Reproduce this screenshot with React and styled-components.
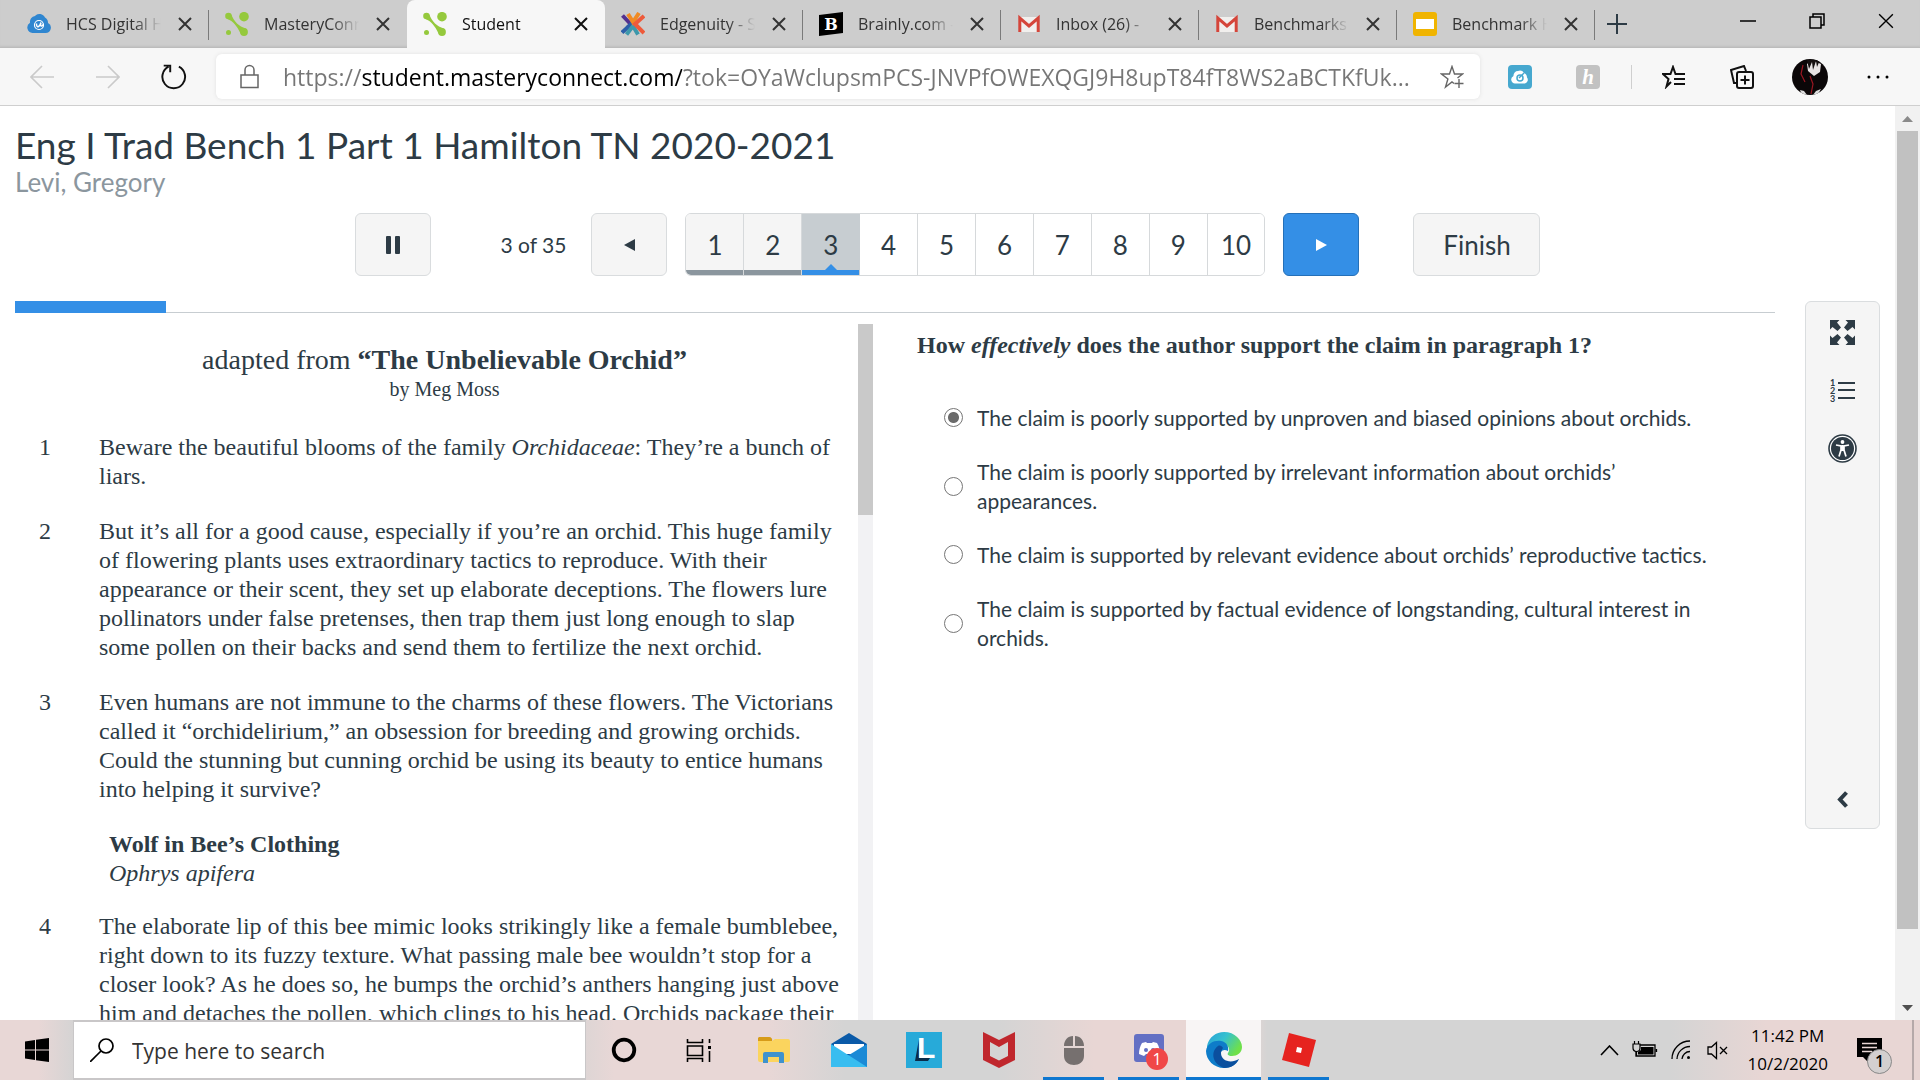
import React, { useState } from 'react';
import styled, { createGlobalStyle } from 'styled-components';

const ui = '"Open Sans", "Noto Sans", sans-serif';
const lato = 'Lato, sans-serif';
const serif = '"Liberation Serif", serif';
const ink = '#2d3b45';

const GlobalStyle = createGlobalStyle`
  * {
    box-sizing: border-box;
  }
  body {
    margin: 0;
    font-family: ${lato};
    color: ${ink};
    background: #fff;
  }
  button {
    margin: 0;
    padding: 0;
    border: 0;
    background: none;
    color: inherit;
    font: inherit;
    cursor: pointer;
  }
  svg {
    display: block;
    flex: none;
  }
`;

const Screen = styled.div`
  display: flex;
  flex-direction: column;
  height: 100vh;
  overflow: hidden;
`;

/* ---------- browser chrome ---------- */

const TabStrip = styled.header`
  display: flex;
  height: 48px;
  flex: none;
  padding-left: 11px;
  background: #cdcdcd;
  box-shadow: inset 0 -3px 3px -2px #b4b4b4;
`;

const TabItem = styled.div`
  flex: 0 1 198px;
  min-width: 0;
  display: flex;
  align-items: center;
  gap: 15px;
  padding: 0 17px 0 16px;
  position: relative;
  border-radius: 8px 8px 0 0;
  background: ${(props) => (props.$active ? '#f7f7f7' : 'transparent')};
  color: ${(props) => (props.$active ? '#111' : '#333')};

  &::after {
    content: '';
    position: absolute;
    right: 0;
    top: 10px;
    height: 30px;
    width: 1px;
    background: ${(props) => (props.$divider ? '#7a7a7a' : 'transparent')};
  }
`;

const TabTitle = styled.button`
  flex: 1;
  min-width: 0;
  overflow: hidden;
  white-space: nowrap;
  text-align: left;
  font-family: ${ui};
  font-size: 16px;
  line-height: 24px;
  mask-image: linear-gradient(to right, #000 70%, transparent 98%);
`;

const WindowButtons = styled.div`
  display: flex;
  align-items: center;
  margin-left: auto;
  padding-bottom: 6px;
`;

const WindowButton = styled.button`
  width: 69px;
  height: 40px;
  display: flex;
  align-items: center;
  justify-content: center;
  color: #000;
`;

const NewTab = styled.button`
  width: 44px;
  display: flex;
  align-items: center;
  justify-content: center;
`;

const AddressRow = styled.div`
  display: flex;
  align-items: center;
  flex: none;
  height: 58px;
  padding: 0 8px 0 9px;
  background: #f7f7f7;
  border-bottom: 1px solid #cfcfcf;
`;

const NavButton = styled.button`
  width: ${(props) => (props.$wide ? 68 : 66)}px;
  height: 44px;
  display: flex;
  align-items: center;
  justify-content: center;
  color: ${(props) => (props.$dim ? '#cacaca' : '#111')};
`;

const AddressBox = styled.div`
  flex: 1;
  min-width: 0;
  height: 45px;
  margin: 0 6px 0 9px;
  padding: 0 16px 0 24px;
  display: flex;
  align-items: center;
  gap: 24px;
  border-radius: 6px;
  background: #fff;
  box-shadow: 0 0 4px #e2e2e2;
  color: #666;
`;

const AddressInput = styled.input`
  flex: 1;
  min-width: 0;
  padding: 0;
  border: 0;
  outline: 0;
  font-family: ${ui};
  font-size: 23px;
  line-height: 32px;
  text-overflow: ellipsis;
  color: #767676;
  background: linear-gradient(to right, #767676 79px, #000 79px, #000 399px, #767676 399px);
  background-clip: text;
  -webkit-text-fill-color: transparent;
`;

const Divider = styled.span`
  width: 1px;
  height: 24px;
  margin: 0 8px 0 9px;
  background: #cfcfcf;
`;

/* ---------- test page ---------- */

const Viewport = styled.div`
  flex: 1;
  min-height: 0;
  display: flex;
`;

const Page = styled.main`
  flex: 1;
  min-width: 0;
  display: flex;
  flex-direction: column;
  padding: 17px 15px 0;
`;

const Title = styled.h1`
  margin: 0;
  font-size: 37px;
  line-height: 44px;
  font-weight: 400;
`;

const StudentName = styled.p`
  margin: 0;
  font-size: 26px;
  line-height: 30px;
  color: #8b969e;
`;

const Controls = styled.div`
  display: flex;
  justify-content: center;
  align-items: center;
  margin-top: 16px;
`;

const Button = styled.button`
  width: ${(props) => props.$width || 76}px;
  height: 63px;
  display: flex;
  align-items: center;
  justify-content: center;
  font-size: 26px;
  border: 1px solid ${(props) => (props.$primary ? '#2570b8' : '#d9dcde')};
  border-radius: 6px;
  background: ${(props) => (props.$primary ? '#348fe6' : '#f5f5f5')};
  color: ${(props) => (props.$primary ? '#fff' : ink)};
`;

const Counter = styled.span`
  padding: 0 25px 0 70px;
  font-size: 21px;
`;

const Pager = styled.div`
  display: flex;
  width: 580px;
  height: 63px;
  margin: 0 18px;
  border: 1px solid #d6d9db;
  border-radius: 6px;
  overflow: hidden;
`;

const Spacer = styled.span`
  width: 54px;
`;

const barColor = { done: '#8b969e', current: '#348fe6', open: 'transparent' };
const cellColor = { done: '#f5f5f5', current: '#c7cdd1', open: '#fff' };

const PagerButton = styled.button`
  flex: 1;
  position: relative;
  font-size: 26px;
  border-right: 1px solid ${(props) => (props.$state === 'current' ? '#c7cdd1' : '#d6d9db')};
  box-shadow: inset 0 -5px ${(props) => barColor[props.$state]};
  background: ${(props) => cellColor[props.$state]};

  &:last-child {
    border-right: 0;
  }

  &[aria-current]::after {
    content: '';
    position: absolute;
    left: 50%;
    bottom: 5px;
    margin-left: -6px;
    border: 6px solid transparent;
    border-top: 0;
    border-bottom-color: #348fe6;
  }
`;

const Body = styled.div`
  flex: 1;
  min-height: 0;
  display: flex;
  gap: 30px;
  margin-top: 25px;
`;

const Content = styled.div`
  flex: 1;
  min-width: 0;
  display: flex;
  flex-direction: column;
`;

const Progress = styled.div`
  height: 12px;
  flex: none;
  border-bottom: 1px solid #c7cdd1;
`;

const ProgressFill = styled.div`
  height: 12px;
  background: #348fe6;
`;

const Panes = styled.div`
  flex: 1;
  min-height: 0;
  display: grid;
  grid-template-columns: 858fr 902fr;
  padding-top: 11px;
`;

const PassagePane = styled.section`
  display: flex;
  min-height: 0;
`;

const Passage = styled.article`
  flex: 1;
  overflow: hidden;
  padding: 20px 15px 0;
  font-family: ${serif};
  font-size: 24px;
  line-height: 29px;
`;

const PassageTitle = styled.h2`
  margin: 0;
  padding-left: 16px;
  font-size: 28px;
  line-height: 31px;
  font-weight: 400;
  text-align: center;
`;

const Byline = styled.p`
  margin: 0 0 30px;
  padding-left: 16px;
  font-size: 20px;
  line-height: 28px;
  text-align: center;
`;

const Paragraph = styled.div`
  display: grid;
  grid-template-columns: 60px 1fr;
  padding-left: 9px;
  margin-bottom: 26px;

  p {
    margin: 0;
  }
`;

const Subheading = styled.h3`
  margin: 0 0 24px;
  padding-left: 79px;
  font-size: 24px;
  line-height: 29px;

  em {
    display: block;
    font-weight: 400;
  }
`;

const PaneScroll = styled.div`
  width: 15px;
  background: #f2f2f4;
`;

const PaneThumb = styled.div`
  height: 191px;
  background: #c9c9c9;
`;

const Question = styled.section`
  padding: 7px 40px 0 44px;
`;

const Prompt = styled.h2`
  margin: 0 0 43px;
  font-family: ${serif};
  font-size: 24px;
  line-height: 29px;
`;

const Choices = styled.fieldset`
  margin: 0;
  padding: 0 0 0 27px;
  border: 0;
  display: flex;
  flex-direction: column;
  gap: 25px;
`;

const Choice = styled.label`
  display: flex;
  align-items: center;
  gap: 14px;
  font-size: 21px;
  line-height: 29px;
`;

const Radio = styled.input`
  appearance: none;
  flex: none;
  width: 19px;
  height: 19px;
  margin: 0;
  border: 1px solid #767676;
  border-radius: 50%;

  &:checked {
    background: radial-gradient(circle, #6b6b6b 5px, #fff 6px);
  }
`;

const Tools = styled.aside`
  width: 75px;
  height: 528px;
  display: flex;
  flex-direction: column;
  align-items: center;
  padding: 15px 0 14px;
  border: 1px solid #dadddf;
  border-radius: 6px;
  background: #f5f5f5;
`;

const ToolButton = styled.button`
  width: 58px;
  height: 30px;
  display: flex;
  align-items: center;
  justify-content: center;
  margin-bottom: ${(props) => (props.$last ? 0 : 28)}px;
  margin-top: ${(props) => (props.$last ? 'auto' : 0)};
`;

const Scrollbar = styled.div`
  width: 25px;
  display: flex;
  flex-direction: column;
  align-items: center;
  background: #f1f1f1;
`;

const ScrollArrow = styled.button`
  width: 25px;
  height: 25px;
  display: flex;
  align-items: center;
  justify-content: center;
`;

const ScrollTrack = styled.div`
  flex: 1;
  display: flex;
  padding-bottom: 66px;
`;

const ScrollThumb = styled.div`
  width: 21px;
  background: #c1c1c1;
`;

/* ---------- taskbar ---------- */

const Taskbar = styled.footer`
  display: flex;
  flex: none;
  height: 60px;
  font-family: ${ui};
  color: #000;
  background: linear-gradient(
    to right,
    #e8d7d6 0%, #e8d7d6 2%, #d3d3d3 4%, #d3d3d3 29%, #e8d7d6 32%, #e8d7d6 40%,
    #d4d4d4 44%, #d4d4d4 52%, #e8d6d4 57%, #e8d6d4 65%, #d4d4d4 66%, #d4d4d4 87%,
    #e8d6d4 92%, #e8d6d4 100%
  );
`;

const StartButton = styled.button`
  width: 73px;
  display: flex;
  align-items: center;
  justify-content: center;
`;

const SearchBox = styled.label`
  flex: 0 1 513px;
  display: flex;
  align-items: center;
  gap: 18px;
  padding-left: 16px;
  border: 2px solid #c9c7c8;
  border-left: 1px solid #c9c7c8;
  border-right: 1px solid #c9c7c8;
  background: #fff;
`;

const SearchInput = styled.input`
  flex: 1;
  min-width: 0;
  padding: 2px 0 0;
  border: 0;
  outline: 0;
  font-family: ${ui};
  font-size: 21px;

  &::placeholder {
    color: #333;
    opacity: 1;
  }
`;

const TaskButton = styled.button`
  width: 75px;
  display: flex;
  align-items: center;
  justify-content: center;
  position: relative;
  background: ${(props) => (props.$active ? '#f8f5f5' : 'transparent')};

  &::after {
    content: '';
    position: absolute;
    left: ${(props) => (props.$active ? 0 : 7)}px;
    right: ${(props) => (props.$active ? 0 : 7)}px;
    bottom: 0;
    height: 3px;
    background: ${(props) => (props.$running ? '#0e77d0' : 'transparent')};
  }
`;

const Badge = styled.span`
  position: absolute;
  right: 18px;
  bottom: 10px;
  width: 22px;
  height: 22px;
  border-radius: 50%;
  background: #f04747;
  color: #fff;
  font-size: 16px;
  line-height: 22px;
`;

const Tray = styled.div`
  display: flex;
  align-items: center;
  margin-left: auto;
`;

const TrayButton = styled.button`
  width: 36px;
  height: 60px;
  display: flex;
  align-items: center;
  justify-content: center;
`;

const Clock = styled.time`
  padding: 0 12px;
  font-size: 17px;
  line-height: 28px;
  text-align: center;
`;

const Notifications = styled.button`
  width: 74px;
  height: 60px;
  padding-left: 17px;
  position: relative;
  border-right: 2px solid #b5a9a9;
  margin-right: 6px;
`;

const NoticeCount = styled.span`
  position: absolute;
  left: 27px;
  top: 29px;
  width: 25px;
  height: 25px;
  border: 1px solid #888;
  border-radius: 50%;
  background: #d3cfcf;
  font-size: 16px;
  font-weight: 600;
  line-height: 23px;
`;

/* ---------- icons ---------- */

const Line = ({ size = 24, height, width = 2, box = '0 0 24 24', children }) => (
  <svg width={size} height={height || size} viewBox={box} fill="none" stroke="currentColor" strokeWidth={width}>
    {children}
  </svg>
);

const CloseIcon = ({ size = 14, width = 2 }) => (
  <Line size={size} width={width} box="0 0 14 14">
    <path d="M1 1l12 12M13 1L1 13" />
  </Line>
);

const CloudIcon = () => (
  <svg width="24" height="24" viewBox="0 0 24 24">
    <path d="M5.500 21A5.500 5.500 0 0 1 3 10.800 6 6 0 0 1 8 4a6 6 0 0 1 10 1.500 6 6 0 0 1 3 5.500 5.300 5.300 0 0 1-2.500 10z" fill="#2f86d0" />
    <circle cx="12" cy="13" r="4.500" fill="none" stroke="#fff" strokeWidth="1.200" />
    <path d="M9.500 11.500c0 5 2.800 4 4.500-1-1 4 .5 5 2.500 1.500" fill="none" stroke="#fff" strokeWidth="1.400" />
  </svg>
);

const MasteryIcon = () => (
  <svg width="24" height="24" viewBox="0 0 24 24" fill="#95c93d">
    <circle cx="3.500" cy="4" r="3.300" />
    <circle cx="19" cy="4.700" r="4.800" />
    <circle cx="3.500" cy="20.500" r="2.500" />
    <circle cx="19" cy="20" r="3.900" />
    <path d="M2.500 7C8 9 12 14 15.500 21.500l5.300-5C14 14.500 9 9.500 6.500 3z" fill="#95c93d" />
    <path d="M5 9.500C9 12 12 16 14.500 21L9 17zM8 6.500c3 5 7 8.500 12 10L16 11z" fill="none" />
  </svg>
);

const EdgenuityIcon = () => (
  <svg width="24" height="24" viewBox="0 0 24 24" fill="none" strokeWidth="4">
    <path d="M1.500 3.500L10 12.500 6 16" stroke="#53318f" />
    <path d="M1 20.500L12 10.500" stroke="#2c5fa8" />
    <path d="M5.500 22.500L12 14l5 8.500" stroke="#3d98ab" />
    <path d="M7 2l5 8 6-9" stroke="#f08a24" />
    <path d="M23 4l-9 8 9 9" stroke="#ee5a3a" />
  </svg>
);

const BrainlyIcon = () => (
  <svg width="24" height="24" viewBox="0 0 24 24">
    <path d="M0 3L24 0v21L0 24z" fill="#000" />
    <text x="12" y="18" textAnchor="middle" fontFamily="DejaVu Serif, serif" fontWeight="700" fontSize="16" fill="#fff">B</text>
  </svg>
);

const GmailIcon = () => (
  <svg width="24" height="24" viewBox="0 0 24 24">
    <path d="M2 5h20v15H2z" fill="#f1efed" />
    <path d="M2.800 20V6L12 14l9.200-8v14" fill="none" stroke="#d5453a" strokeWidth="3" />
  </svg>
);

const SlidesIcon = () => (
  <svg width="24" height="24" viewBox="0 0 24 24">
    <rect width="24" height="24" rx="3" fill="#f0b400" />
    <rect x="3" y="7" width="18" height="10" fill="#fff" />
  </svg>
);

const LockIcon = () => (
  <Line size={19} height={25} box="0 0 19 25" width={1.5}>
    <path d="M1 11h17v12.500H1zM5 11V6a4.500 4.500 0 0 1 9 0v5" />
  </Line>
);

const StarAddIcon = () => (
  <Line width={1.4}>
    <path d="M14 18.500L12 17l-6.500 5 2.400-8L1.500 9h8L12 1.500 14.500 9h8l-5 4M19 14v9M14.500 18.500h9" />
  </Line>
);

const CloudExtIcon = () => (
  <svg width="24" height="24" viewBox="0 0 24 24">
    <rect width="24" height="24" rx="4" fill="#46a8cf" />
    <path d="M7 18.500a4 4 0 0 1-1.500-7.600A4.500 4.500 0 0 1 10 6a5 5 0 0 1 6 2 5 5 0 0 1 3 4.500 3.800 3.800 0 0 1-2 6z" fill="#fff" />
    <circle cx="12" cy="13" r="3" fill="none" stroke="#46a8cf" strokeWidth="1.500" />
    <path d="M11 13l5-5" stroke="#46a8cf" strokeWidth="1.500" />
  </svg>
);

const HoneyIcon = () => (
  <svg width="24" height="24" viewBox="0 0 24 24">
    <rect width="24" height="24" rx="4" fill="#c2c2c2" />
    <text x="12" y="19" textAnchor="middle" fontFamily="Liberation Serif, serif" fontStyle="italic" fontWeight="700" fontSize="21" fill="#fff">h</text>
  </svg>
);

const Avatar = () => (
  <svg width="36" height="36" viewBox="0 0 36 36">
    <clipPath id="face"><circle cx="18" cy="18" r="18" /></clipPath>
    <g clipPath="url(#face)">
      <rect width="36" height="36" fill="#0b0708" />
      <path d="M15 5l5-4 9 4-1 8-6 4-6-5z" fill="#e8e4e4" />
      <path d="M15 1l2 9 3-7 1 8 3-9 1 6 3-7z" fill="#151010" />
      <path d="M11 6L9 15l4 8M18 17l3 8-2 10" fill="none" stroke="#9b1722" strokeWidth="1.200" />
      <path d="M8 31l4 1 3 4h-5zM24 32l5-2-3 5-5 1z" fill="#ddd" />
    </g>
  </svg>
);

const ListStarIcon = () => (
  <Line width={2}>
    <path d="M9 17l-4.500 4.500L6.500 14 1 9h7.500L11 2l2.500 7H23M12 14h11M12 19h11" />
  </Line>
);

const CollectionsIcon = () => (
  <Line width={2}>
    <rect x="7" y="7" width="16" height="16" rx="2" />
    <path d="M15 10.500v9M10.500 15h9M6 18L4 18 1 5l13-4 2 5" />
  </Line>
);

const ExpandIcon = () => (
  <svg width="25" height="25" viewBox="0 0 25 25" fill={ink}>
    {[0, 90, 180, 270].map((angle) => (
      <path key={angle} d="M0 0h9.500L7 2.500l4 5L7.500 11l-5-4L0 9.500z" transform={`rotate(${angle} 12.500 12.500)`} />
    ))}
  </svg>
);

const NumberedIcon = () => (
  <svg width="25" height="25" viewBox="0 0 25 25" fill={ink}>
    <text fontFamily="Lato, sans-serif" fontSize="9" fontWeight="700">
      <tspan x="0" y="8">1</tspan>
      <tspan x="0" y="16">2</tspan>
      <tspan x="0" y="24">3</tspan>
    </text>
    <path d="M8 4h17v2H8zM8 11h17v2H8zM8 19h17v2H8z" />
  </svg>
);

const AccessibilityIcon = () => (
  <svg width="29" height="29" viewBox="0 0 29 29">
    <circle cx="14.500" cy="14.500" r="13.500" fill="#fff" stroke={ink} strokeWidth="1.600" />
    <circle cx="14.500" cy="14.500" r="11.500" fill={ink} />
    <circle cx="14.500" cy="8" r="1.900" fill="#fff" />
    <path d="M8 11l5 1v4l-2 6.500M21 11l-5 1v4l2 6.500M14.500 11v6" fill="none" stroke="#fff" strokeWidth="1.700" />
  </svg>
);

const WindowsIcon = () => (
  <svg width="24" height="24" viewBox="0 0 24 24">
    <path d="M0 3.400l10-1.400v9.500H0zM11 1.800L24 0v11.500H11zM0 12.500h10V22L0 20.600zM11 12.500h13V24l-13-1.800z" />
  </svg>
);

const TaskViewIcon = () => (
  <Line size={25} width={1.6} box="0 0 25 25">
    <path d="M1.500 1v3.500h15V1M1.500 24v-3.500h15V24M1.500 8h15v9.500h-15zM23.500 1v4M23.500 13v11" />
    <path d="M22 8h3v3h-3z" fill="currentColor" stroke="none" />
  </Line>
);

const FolderIcon = () => (
  <svg width="33" height="28" viewBox="0 0 33 28">
    <path d="M2 1h10a3 3 0 0 1 3 4H1V2z" fill="#d79b18" />
    <path d="M1 5h14l3-2h13a2 2 0 0 1 2 2v19a2 2 0 0 1-2 2H3a2 2 0 0 1-2-2z" fill="#fbd45e" />
    <path d="M6 27V18a2 2 0 0 1 2-2h17a2 2 0 0 1 2 2v9h-5v-6H11v6z" fill="#3f92cd" />
  </svg>
);

const MailIcon = () => (
  <svg width="36" height="34" viewBox="0 0 36 34">
    <path d="M0 11L18 0l18 11v12H0z" fill="#0a5aa8" />
    <path d="M3 11h30v10H3z" fill="#fff" />
    <path d="M36 11v23H0L18 22z" fill="#1b8ad6" />
    <path d="M0 11l18 11.500 18 11.500H0z" fill="#38bdf0" />
  </svg>
);

const LexiaIcon = () => (
  <svg width="36" height="36" viewBox="0 0 36 36">
    <rect width="36" height="36" fill="#27aad9" />
    <path d="M13 7L9 29l4-3zM9 29h13l2-3H12z" fill="#0b2c4a" />
    <text x="11" y="26" fontFamily="Liberation Sans, sans-serif" fontWeight="700" fontSize="30" fill="#fff">L</text>
  </svg>
);

const McAfeeIcon = () => (
  <svg width="32" height="36" viewBox="0 0 32 36">
    <path d="M0 0l16 8L32 0v28l-16 8-16-8zM7 10v14l9 4.500 9-4.500V10l-9 5z" fill="#c0272d" fillRule="evenodd" />
  </svg>
);

const MouseIcon = () => (
  <svg width="20" height="29" viewBox="0 0 20 29" fill="#76706f">
    <path d="M9 0v10H0C0 4 4 0 9 0zM11 0v10h9c0-6-4-10-9-10zM0 12h20v8c0 12-20 12-20 0z" />
  </svg>
);

const DiscordIcon = () => (
  <svg width="30" height="32" viewBox="0 0 30 32">
    <path d="M3 0h24a3 3 0 0 1 3 3v29l-5-4H3a3 3 0 0 1-3-3V3a3 3 0 0 1 3-3z" fill="#6370c4" />
    <path d="M8 9l4-1 1 1h5l1-1 4 1c2 3 3 7 3 11l-5 2-2-2h-7l-2 2-5-2c0-4 1-8 3-11z" fill="#fff" />
    <circle cx="12" cy="16" r="2" fill="#6370c4" />
    <circle cx="19" cy="16" r="2" fill="#6370c4" />
  </svg>
);

const EdgeIcon = () => (
  <svg width="36" height="36" viewBox="0 0 36 36">
    <defs>
      <linearGradient id="edgeTop" x1="0" y1="0" x2="1" y2="0.500">
        <stop offset="0" stopColor="#2a9fd8" />
        <stop offset="0.500" stopColor="#35c1cf" />
        <stop offset="1" stopColor="#6fe04a" />
      </linearGradient>
    </defs>
    <path d="M1 14C3 5 10 0 18 0c11 0 18 8 18 15 0 6-5 9-10 9-4 0-5-2-4-3 3-4 0-9-6-9-7 0-12 4-15 9z" fill="url(#edgeTop)" />
    <path d="M0 19C1 11 9 8 15 9c6 1 8 6 7 10-5-3-9 1-7 6 3 7 12 8 18 2C29 34 23 36 18 36 8 36 0 28 0 19z" fill="#0e7cc9" />
    <path d="M12 14c-7 5-7 17 6 22 7 0 12-3 15-9-8 5-18 2-18-6 0-2 1-4 2-5-1-2-3-3-5-2z" fill="#0b4f9e" />
  </svg>
);

const RobloxIcon = () => (
  <svg width="34" height="34" viewBox="0 0 34 34">
    <path d="M7 0l27 7-7 27-27-7z" fill="#e6231f" />
    <path d="M15 14l5 1-1 5-5-1z" fill="#fff" />
  </svg>
);

const BatteryIcon = () => (
  <svg width="26" height="18" viewBox="0 0 26 18">
    <path d="M8 4h15v11H4v-5M24.500 8v3" fill="none" stroke="#000" strokeWidth="1.300" />
    <path d="M9 6h12.500v7.500H6V11l3-2z" />
    <path d="M2.500 0v3M6.500 0v3M1 3h7v4a3.500 3.500 0 0 1-7 0zM4.500 10v5" fill="none" stroke="#000" strokeWidth="1.200" />
  </svg>
);

const WifiIcon = () => (
  <Line size={20} width={1.3} box="0 0 20 20">
    <path d="M1 19A18 18 0 0 1 19 1M6 19A13 13 0 0 1 19 6.500M11 19a8 8 0 0 1 8-7.500" />
    <circle cx="17.500" cy="17.500" r="1.500" fill="currentColor" stroke="none" />
  </Line>
);

const SpeakerIcon = () => (
  <Line size={21} width={1.3} box="0 0 21 21">
    <path d="M1 7v7h3.500l5 4.500v-16L4.500 7zM13 7l7 7M20 7l-7 7" />
  </Line>
);

const NoticeIcon = () => (
  <svg width="25" height="24" viewBox="0 0 25 24">
    <path d="M0 0h25v19H13l-2 5-5-5H0z" />
    <path d="M5 5.500h15M5 9.500h15M5 13.500h10" stroke="#e8d6d4" strokeWidth="1.400" />
  </svg>
);

/* ---------- data ---------- */

const tabs = [
  { title: 'HCS Digital Hub', icon: <CloudIcon />, divider: true },
  { title: 'MasteryConnect', icon: <MasteryIcon /> },
  { title: 'Student', icon: <MasteryIcon />, active: true },
  { title: 'Edgenuity - S', icon: <EdgenuityIcon />, divider: true },
  { title: 'Brainly.com -', icon: <BrainlyIcon />, divider: true },
  { title: 'Inbox (26) -', icon: <GmailIcon />, divider: true },
  { title: 'Benchmarks', icon: <GmailIcon />, divider: true },
  { title: 'Benchmark H', icon: <SlidesIcon />, divider: true },
];

const choices = [
  'The claim is poorly supported by unproven and biased opinions about orchids.',
  'The claim is poorly supported by irrelevant information about orchids’ appearances.',
  'The claim is supported by relevant evidence about orchids’ reproductive tactics.',
  'The claim is supported by factual evidence of longstanding, cultural interest in orchids.',
];

const apps = [
  { name: 'Cortana', icon: <Line size={26} width={3.5}><circle cx="12" cy="12" r="9.500" /></Line> },
  { name: 'Task View', icon: <TaskViewIcon /> },
  { name: 'File Explorer', icon: <FolderIcon /> },
  { name: 'Mail', icon: <MailIcon /> },
  { name: 'Lexia', icon: <LexiaIcon /> },
  { name: 'McAfee', icon: <McAfeeIcon /> },
  { name: 'Mouse', icon: <MouseIcon />, running: true },
  { name: 'Discord', icon: <DiscordIcon />, running: true, badge: 1 },
  { name: 'Edge', icon: <EdgeIcon />, running: true, active: true },
  { name: 'Roblox', icon: <RobloxIcon />, running: true },
];

const url = 'https://student.masteryconnect.com/?tok=OYaWclupsmPCS-JNVPfOWEXQGJ9H8upT84fT8WS2aBCTKfUk...';

const pageState = (page) => {
  if (page === 3) return 'current';
  return page < 3 ? 'done' : 'open';
};

/* ---------- sections ---------- */

const BrowserBar = () => (
  <>
    <TabStrip>
      {tabs.map((tab, i) => (
        <TabItem key={i} $active={tab.active} $divider={tab.divider}>
          {tab.icon}
          <TabTitle>{tab.title}</TabTitle>
          <button aria-label="Close tab"><CloseIcon /></button>
        </TabItem>
      ))}
      <NewTab aria-label="New tab">
        <Line size={20} box="0 0 20 20"><path d="M10 0v20M0 10h20" /></Line>
      </NewTab>
      <WindowButtons>
        <WindowButton aria-label="Minimize">
          <Line size={16} box="0 0 16 16" width={1.5}><path d="M0 8h16" /></Line>
        </WindowButton>
        <WindowButton aria-label="Restore">
          <Line size={16} box="0 0 16 16" width={1.5}><path d="M1 4h11v11H1zM4 4V1h11v11h-3" /></Line>
        </WindowButton>
        <WindowButton aria-label="Close window"><CloseIcon size={16} width={1.2} /></WindowButton>
      </WindowButtons>
    </TabStrip>
    <AddressRow>
      <NavButton aria-label="Back" $dim>
        <Line width={1.6}><path d="M24 12H1M12 1L1 12l11 11" /></Line>
      </NavButton>
      <NavButton aria-label="Forward" $dim>
        <Line width={1.6}><path d="M0 12h23M12 1l11 11-11 11" /></Line>
      </NavButton>
      <NavButton aria-label="Refresh">
        <Line size={26} width={1.8}><path d="M16.500 2.500a10.500 10.500 0 1 1-9.500 0M2.500 1.500h6v6" /></Line>
      </NavButton>
      <AddressBox>
        <LockIcon />
        <AddressInput aria-label="Address" defaultValue={url} />
        <button aria-label="Add to favorites"><StarAddIcon /></button>
      </AddressBox>
      <NavButton aria-label="Cloud extension" $wide><CloudExtIcon /></NavButton>
      <NavButton aria-label="Honey" $wide><HoneyIcon /></NavButton>
      <Divider />
      <NavButton aria-label="Favorites" $wide><ListStarIcon /></NavButton>
      <NavButton aria-label="Collections" $wide><CollectionsIcon /></NavButton>
      <NavButton aria-label="Profile" $wide><Avatar /></NavButton>
      <NavButton aria-label="More" $wide>
        <svg width="22" height="4" viewBox="0 0 22 4">
          <circle cx="2" cy="2" r="1.500" />
          <circle cx="11" cy="2" r="1.500" />
          <circle cx="20" cy="2" r="1.500" />
        </svg>
      </NavButton>
    </AddressRow>
  </>
);

const TestControls = () => (
  <Controls>
    <Button aria-label="Pause">
      <svg width="14" height="18" viewBox="0 0 14 18" fill={ink}>
        <rect width="5" height="18" rx="1" />
        <rect x="9" width="5" height="18" rx="1" />
      </svg>
    </Button>
    <Counter>3 of 35</Counter>
    <Button aria-label="Previous">
      <svg width="11" height="12" viewBox="0 0 11 12" fill={ink}><path d="M11 0v12L0 6z" /></svg>
    </Button>
    <Pager>
      {[1, 2, 3, 4, 5, 6, 7, 8, 9, 10].map((page) => (
        <PagerButton key={page} $state={pageState(page)} aria-current={page === 3 ? 'page' : undefined}>
          {page}
        </PagerButton>
      ))}
    </Pager>
    <Button aria-label="Next" $primary>
      <svg width="11" height="12" viewBox="0 0 11 12" fill="#fff"><path d="M0 0v12l11-6z" /></svg>
    </Button>
    <Spacer />
    <Button $width={127}>Finish</Button>
  </Controls>
);

const PassageText = () => (
  <PassagePane>
    <Passage>
      <PassageTitle>adapted from <strong>“The Unbelievable Orchid”</strong></PassageTitle>
      <Byline>by Meg Moss</Byline>
      <Paragraph>
        <span>1</span>
        <p>Beware the beautiful blooms of the family <em>Orchidaceae</em>: They’re a bunch of liars.</p>
      </Paragraph>
      <Paragraph>
        <span>2</span>
        <p>
          But it’s all for a good cause, especially if you’re an orchid. This huge family of flowering plants
          uses extraordinary tactics to reproduce. With their appearance or their scent, they set up elaborate
          deceptions. The flowers lure pollinators under false pretenses, then trap them just long enough to
          slap some pollen on their backs and send them to fertilize the next orchid.
        </p>
      </Paragraph>
      <Paragraph>
        <span>3</span>
        <p>
          Even humans are not immune to the charms of these flowers. The Victorians called it “orchidelirium,”
          an obsession for breeding and growing orchids. Could the stunning but cunning orchid be using its
          beauty to entice humans into helping it survive?
        </p>
      </Paragraph>
      <Subheading>
        Wolf in Bee’s Clothing
        <em>Ophrys apifera</em>
      </Subheading>
      <Paragraph>
        <span>4</span>
        <p>
          The elaborate lip of this bee mimic looks strikingly like a female bumblebee, right down to its fuzzy
          texture. What passing male bee wouldn’t stop for a closer look? As he does so, he bumps the orchid’s
          anthers hanging just above him and detaches the pollen, which clings to his head. Orchids package their
        </p>
      </Paragraph>
    </Passage>
    <PaneScroll><PaneThumb /></PaneScroll>
  </PassagePane>
);

const QuestionForm = () => {
  const [answer, setAnswer] = useState(0);

  return (
    <Question>
      <Prompt>How <em>effectively</em> does the author support the claim in paragraph 1?</Prompt>
      <Choices>
        {choices.map((choice, i) => (
          <Choice key={i}>
            <Radio type="radio" name="answer" checked={answer === i} onChange={() => setAnswer(i)} />
            <span>{choice}</span>
          </Choice>
        ))}
      </Choices>
    </Question>
  );
};

const SystemBar = () => (
  <Taskbar>
    <StartButton aria-label="Start"><WindowsIcon /></StartButton>
    <SearchBox>
      <Line width={1.7}><circle cx="16" cy="8" r="7" /><path d="M11 13L0 24" /></Line>
      <SearchInput placeholder="Type here to search" aria-label="Search" />
    </SearchBox>
    {apps.map((app) => (
      <TaskButton key={app.name} aria-label={app.name} $running={app.running} $active={app.active}>
        {app.icon}
        {app.badge && <Badge>{app.badge}</Badge>}
      </TaskButton>
    ))}
    <Tray>
      <TrayButton aria-label="Hidden icons">
        <Line size={19} height={11} box="0 0 19 11" width={1.6}><path d="M1 10l8.500-9 8.500 9" /></Line>
      </TrayButton>
      <TrayButton aria-label="Battery"><BatteryIcon /></TrayButton>
      <TrayButton aria-label="Network"><WifiIcon /></TrayButton>
      <TrayButton aria-label="Volume"><SpeakerIcon /></TrayButton>
      <Clock>11:42 PM<br />10/2/2020</Clock>
      <Notifications aria-label="Notifications">
        <NoticeIcon />
        <NoticeCount>1</NoticeCount>
      </Notifications>
    </Tray>
  </Taskbar>
);

const App = () => (
  <Screen>
    <GlobalStyle />
    <BrowserBar />
    <Viewport>
      <Page>
        <Title>Eng I Trad Bench 1 Part 1 Hamilton TN 2020-2021</Title>
        <StudentName>Levi, Gregory</StudentName>
        <TestControls />
        <Body>
          <Content>
            <Progress><ProgressFill style={{ width: `${(3 / 35) * 100}%` }} /></Progress>
            <Panes>
              <PassageText />
              <QuestionForm />
            </Panes>
          </Content>
          <Tools>
            <ToolButton aria-label="Full screen"><ExpandIcon /></ToolButton>
            <ToolButton aria-label="Question list"><NumberedIcon /></ToolButton>
            <ToolButton aria-label="Accessibility"><AccessibilityIcon /></ToolButton>
            <ToolButton aria-label="Collapse" $last>
              <Line size={11} height={17} box="0 0 11 17" width={4}><path d="M9.500 1.500L3 8.500l6.500 7" /></Line>
            </ToolButton>
          </Tools>
        </Body>
      </Page>
      <Scrollbar>
        <ScrollArrow aria-label="Scroll up">
          <svg width="11" height="6" viewBox="0 0 11 6" fill="#8a8a8a"><path d="M0 6l5.500-6L11 6z" /></svg>
        </ScrollArrow>
        <ScrollTrack><ScrollThumb /></ScrollTrack>
        <ScrollArrow aria-label="Scroll down">
          <svg width="11" height="6" viewBox="0 0 11 6" fill="#505050"><path d="M0 0l5.500 6L11 0z" /></svg>
        </ScrollArrow>
      </Scrollbar>
    </Viewport>
    <SystemBar />
  </Screen>
);

export default App;
